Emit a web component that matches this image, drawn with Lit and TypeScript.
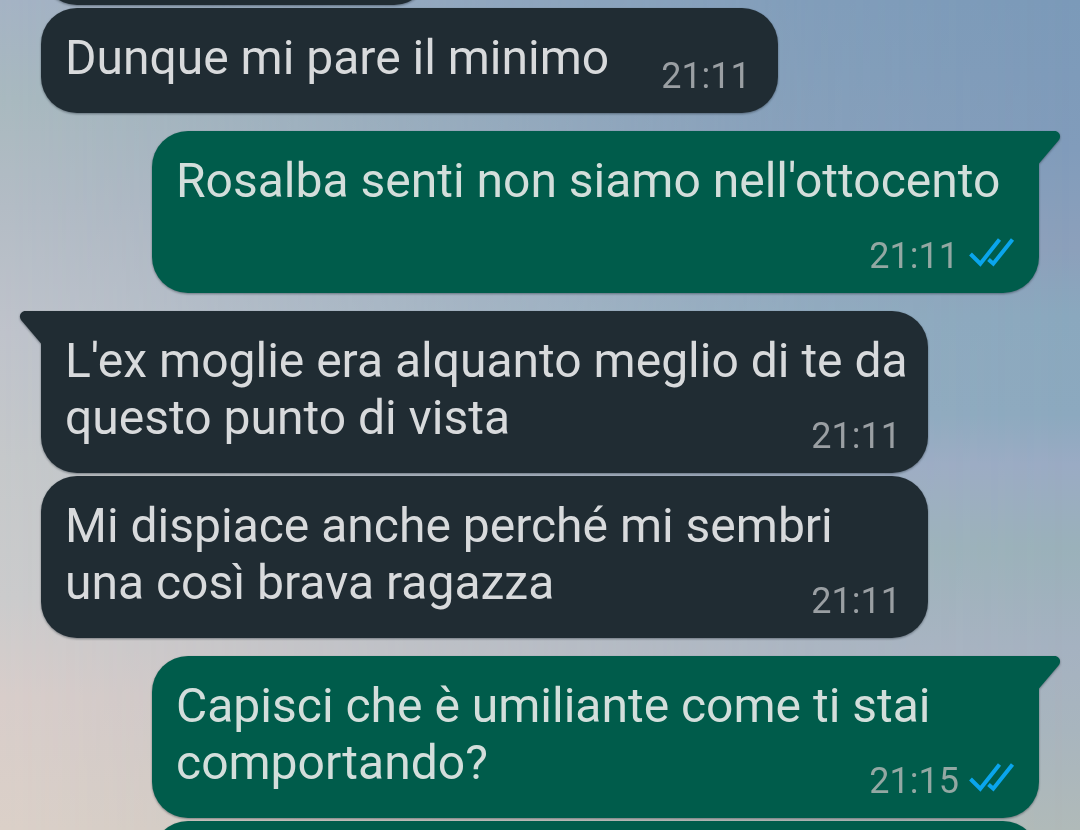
import { LitElement, html, css, svg, nothing } from "lit";
import { customElement, property } from "lit/decorators.js";

interface Message {
  text: string;
  time: string;
  mine?: boolean;
  first?: boolean;
}

const messages: Message[] = [
  { text: "Dunque mi pare il minimo", time: "21:11" },
  { text: "Rosalba senti non siamo nell'ottocento", time: "21:11", mine: true, first: true },
  { text: "L'ex moglie era alquanto meglio di te da questo punto di vista", time: "21:11", first: true },
  { text: "Mi dispiace anche perché mi sembri una così brava ragazza", time: "21:11" },
  { text: "Capisci che è umiliante come ti stai comportando?", time: "21:15", mine: true, first: true },
];

const ticks = svg`<path d="M1.500 16L11.300 25.700L30.500 1.500M19.500 21.500L24.300 25.700L43.500 1.500" />`;

@customElement("chat-bubble")
export class ChatBubble extends LitElement {
  @property() text = "";
  @property() time = "";
  @property({ type: Boolean, reflect: true }) mine = false;
  @property({ type: Boolean, reflect: true }) first = false;

  static styles = css`
    :host {
      display: flow-root;
      position: relative;
      box-sizing: border-box;
      max-width: calc(100% - 111px);
      align-self: flex-start;
      padding: 21px 20px 16px 24px;
      border-radius: 36px;
      background: #202c33;
      color: #d8dadc;
      font-size: 48px;
      line-height: 57px;
      filter: drop-shadow(0 1px 1px rgba(20, 30, 40, 0.45));
    }
    :host([mine]) {
      align-self: flex-end;
      background: #005c4b;
      color: #d3dedb;
    }
    :host([first]) {
      margin-top: 15px;
    }
    :host([first]:not([mine])) {
      border-top-left-radius: 0;
    }
    :host([first][mine]) {
      border-top-right-radius: 0;
    }
    .meta {
      float: right;
      display: flex;
      align-items: flex-start;
      gap: 10px;
      margin: 26px 7px 0 52px;
      color: #9a9fa3;
      font-size: 36px;
      line-height: 42px;
    }
    :host([mine]) .meta {
      margin-right: 4px;
      color: #93a8a3;
    }
    .ticks {
      width: 46px;
      height: 29px;
      margin-top: 3px;
      fill: none;
      stroke: #0aa5ec;
      stroke-width: 4;
    }
    .tail {
      position: absolute;
      top: 0;
      right: 100%;
      width: 21px;
      height: 33px;
      fill: #202c33;
      transform: scaleX(-1);
      overflow: visible;
    }
    :host([mine]) .tail {
      right: auto;
      left: 100%;
      fill: #005c4b;
      transform: none;
    }
  `;

  render() {
    return html`${this.first
        ? html`<svg class="tail" viewBox="0 0 21 33" aria-hidden="true">
            <path d="M-1 0H15.500C20.500 0 22.800 5.500 19.500 9.500L0 32.500H-1Z" />
          </svg>`
        : nothing}<span>${this.text}</span
      ><span class="meta"
        ><time>${this.time}</time>${this.mine
          ? html`<svg class="ticks" viewBox="0 0 46 29" role="img" aria-label="Letto">${ticks}</svg>`
          : nothing}</span
      >`;
  }
}

@customElement("app-root")
export class AppRoot extends LitElement {
  static styles = css`
    :host {
      display: block;
      position: relative;
      height: 100vh;
      overflow: hidden;
      font-family: Roboto, "Noto Sans", sans-serif;
      background: linear-gradient(
        #7b9ab9 0%,
        #819cbb 18%,
        #8ca0bb 30%,
        #8aa8be 38%,
        #8ca9bf 50%,
        #9aabc4 56%,
        #9ab1ba 66%,
        #a5b2c1 78%,
        #a8b5be 88%,
        #b0bab9 100%
      );
    }
    .glow {
      position: absolute;
      inset: 0;
      background: linear-gradient(
        #a5b3c4 0%,
        #a9b9bf 12%,
        #b3bcc5 25%,
        #bfc3cb 40%,
        #c5c8ca 55%,
        #cbcbcc 72%,
        #d8cdca 84%,
        #dbd0c8 100%
      );
      mask-image: linear-gradient(to right, #000 0%, rgba(0, 0, 0, 0.85) 15%, rgba(0, 0, 0, 0.15) 75%, transparent 100%);
    }
    .thread {
      position: relative;
      display: flex;
      flex-direction: column;
      gap: 3px;
      padding: 0 41px;
    }
    .edge {
      box-sizing: border-box;
      height: 105px;
      border-radius: 36px;
      background: #202c33;
      filter: drop-shadow(0 1px 1px rgba(20, 30, 40, 0.45));
    }
    .above {
      width: 39%;
      margin-top: -100px;
    }
    .below {
      align-self: flex-end;
      width: calc(100% - 111px);
      background: #005c4b;
    }
  `;

  render() {
    return html`
      <div class="glow"></div>
      <main class="thread">
        <div class="edge above"></div>
        ${messages.map(
          (m) => html`<chat-bubble .text=${m.text} .time=${m.time} .mine=${!!m.mine} .first=${!!m.first}></chat-bubble>`
        )}
        <div class="edge below"></div>
      </main>
    `;
  }
}
